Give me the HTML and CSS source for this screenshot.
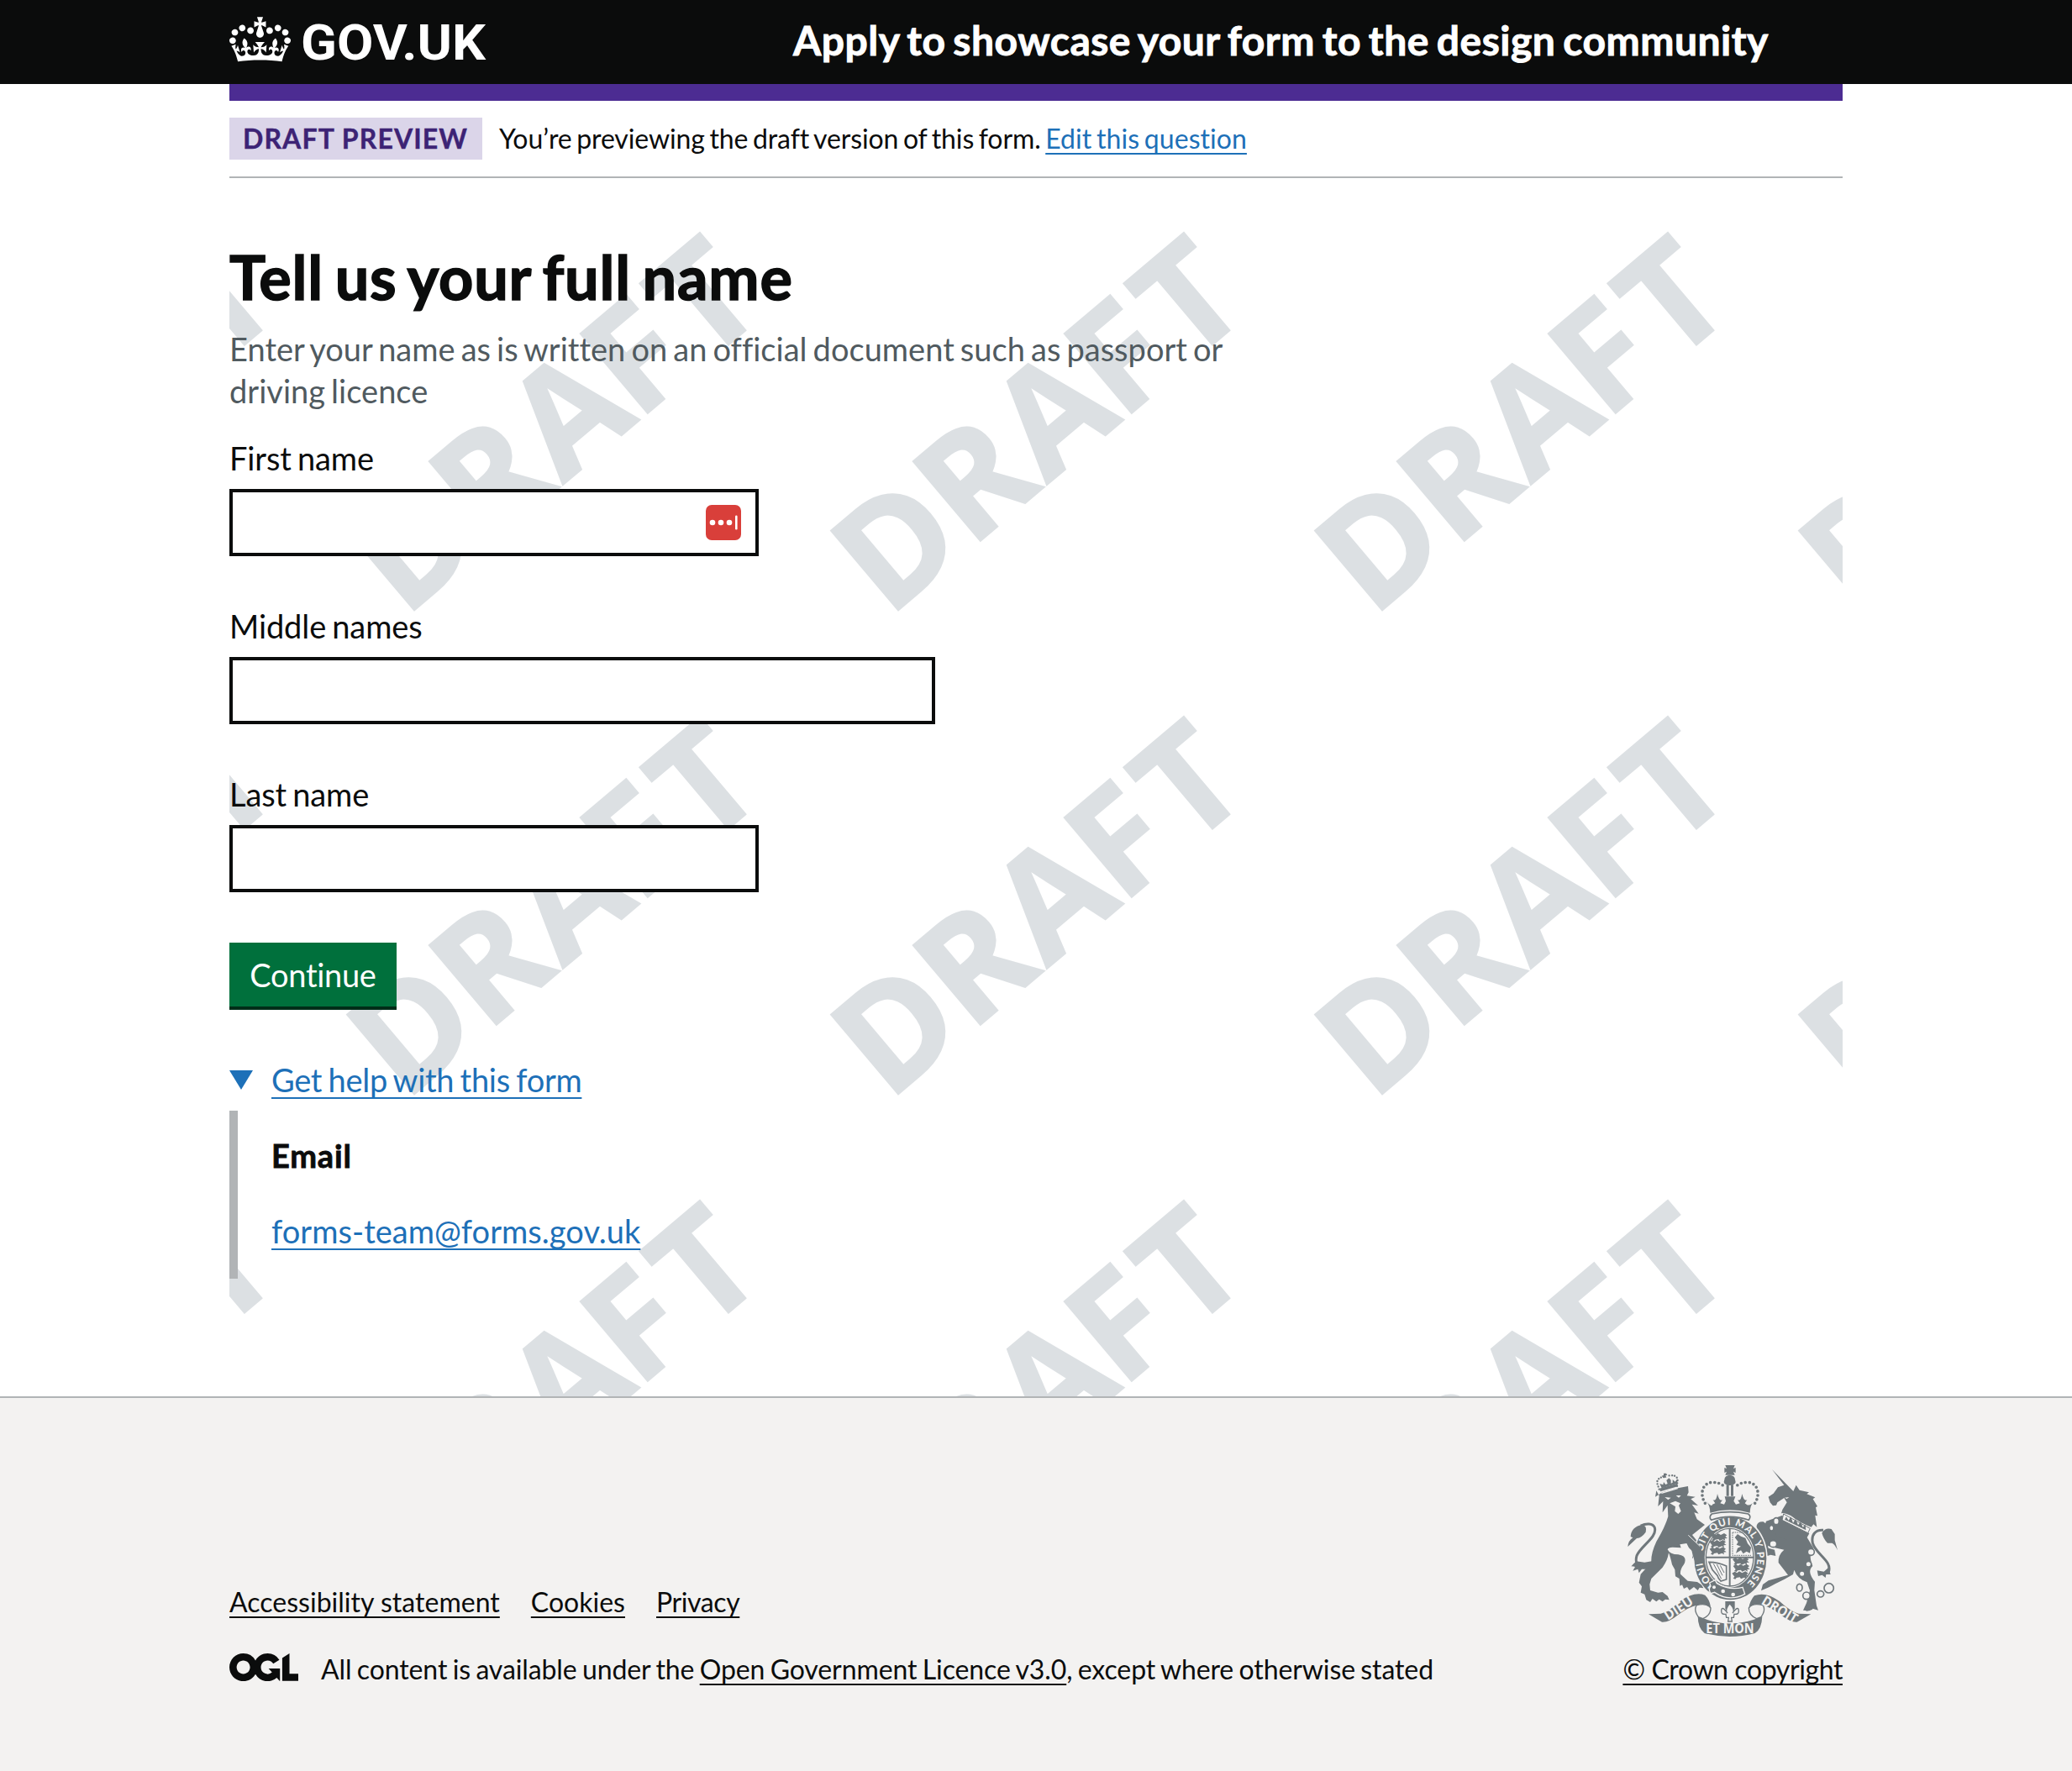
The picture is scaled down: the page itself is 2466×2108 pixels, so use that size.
FILE: index.html
```html
<!DOCTYPE html>
<html lang="en">
<head>
<meta charset="utf-8">
<title>Tell us your full name – Apply to showcase your form to the design community</title>
<link rel="stylesheet" href="styles.css">
</head>
<body>
<header class="header">
  <div class="container header-inner">
    <a class="logo" href="#" aria-label="GOV.UK">
      <svg class="crown" viewBox="0 0 132 97" width="73" height="54" aria-hidden="true"><path fill="#fff" d="M25 30.2c3.5 1.5 7.7-.2 9.1-3.7 1.5-3.6-.2-7.8-3.9-9.2-3.6-1.4-7.6.3-9.1 3.9-1.4 3.5.3 7.5 3.9 9zM9 39.5c3.6 1.5 7.8-.2 9.2-3.7 1.5-3.6-.2-7.8-3.9-9.1-3.6-1.5-7.6.2-9.1 3.8-1.4 3.5.3 7.5 3.8 9zM4.4 57.2c3.5 1.5 7.7-.2 9.1-3.8 1.5-3.6-.2-7.7-3.9-9.1-3.5-1.5-7.6.3-9.1 3.8-1.4 3.5.3 7.6 3.9 9.1zm38.3-21.4c3.5 1.5 7.7-.2 9.1-3.8 1.5-3.6-.2-7.7-3.9-9.1-3.6-1.5-7.6.3-9.1 3.8-1.3 3.6.4 7.7 3.9 9.1zm64.4-5.6c-3.6 1.5-7.8-.2-9.1-3.7-1.5-3.6.2-7.8 3.8-9.2 3.6-1.4 7.7.3 9.2 3.9 1.3 3.5-.4 7.5-3.9 9zm15.9 9.3c-3.6 1.5-7.7-.2-9.1-3.7-1.5-3.6.2-7.8 3.7-9.1 3.6-1.5 7.7.2 9.2 3.8 1.5 3.5-.3 7.5-3.8 9zm4.7 17.7c-3.6 1.5-7.8-.2-9.2-3.8-1.5-3.6.2-7.7 3.9-9.1 3.6-1.5 7.7.3 9.2 3.8 1.3 3.5-.4 7.6-3.9 9.1zM89.3 35.8c-3.6 1.5-7.8-.2-9.2-3.8-1.4-3.6.2-7.7 3.9-9.1 3.6-1.5 7.7.3 9.2 3.8 1.4 3.6-.3 7.7-3.9 9.1zM69.7 17.7l8.9 4.7V9.3l-8.9 2.8c-.2-.3-.5-.6-.9-.9L72.4 0H59.6l3.5 11.2c-.3.3-.6.5-.9.9l-8.8-2.8v13.1l8.8-4.7c.3.3.6.7.9.9l-5 15.4v.1c-.2.8-.4 1.6-.4 2.4 0 4.1 3.1 7.5 7 8.1h.2c.3 0 .7.1 1 .1.4 0 .7 0 1-.1h.2c4-.6 7.1-4.1 7.1-8.1 0-.8-.1-1.7-.4-2.4V34l-5.1-15.4c.4-.2.7-.6 1-.9zM66 92.8c16.9 0 32.8 1.1 47.1 3.2 4-16.9 8.9-26.7 14-33.5l-9.6-3.4c1 4.9 1.1 7.2 0 10.2-1.5-1.4-3-4.3-4.2-8.7L108.6 76c2.8-2 5-3.2 7.5-3.3-4.4 9.4-10 11.9-13.6 11.2-4.3-.8-6.3-4.6-5.6-7.9 1-4.7 5.7-5.9 8-.5 4.3-8.7-3-11.4-7.6-8.8 7.1-7.2 7.9-13.5 2.1-21.1-8 6.1-8.1 12.3-4.5 20.8-4.7-5.4-12.1-2.5-9.5 6.2 3.4-5.2 7.9-2 7.2 3.1-.6 4.3-6.4 7.8-13.5 7.2-10.3-.9-10.9-8-11.2-13.8 2.5-.5 7.1 1.8 11 7.3L80.2 60c-4.1 4.4-8 5.3-12.3 5.4 1.4-4.4 8-11.6 8-11.6H55.5s6.4 7.2 7.9 11.6c-4.2-.1-8-1-12.3-5.4l1.4 16.4c3.9-5.5 8.5-7.7 10.9-7.3-.3 5.8-.9 12.8-11.1 13.8-7.2.6-12.9-2.9-13.5-7.2-.7-5 3.8-8.3 7.1-3.1 2.7-8.7-4.6-11.6-9.4-6.2 3.7-8.5 3.6-14.7-4.6-20.8-5.8 7.6-5 13.9 2.2 21.1-4.7-2.6-11.9.1-7.7 8.8 2.3-5.5 7.1-4.2 8.1.5.7 3.3-1.3 7.1-5.7 7.9-3.5.7-9-1.8-13.5-11.2 2.5.1 4.7 1.3 7.5 3.3l-4.7-15.4c-1.2 4.4-2.7 7.2-4.3 8.7-1.1-3-.9-5.3 0-10.2l-9.5 3.4c5 6.9 9.9 16.7 14 33.5 14.8-2.1 30.8-3.2 47.7-3.2z"/></svg>
      <svg class="wordmark" width="230" height="70" aria-hidden="true"><text x="0" y="51" textLength="220" lengthAdjust="spacingAndGlyphs">GOV.UK</text></svg>
    </a>
    <a class="service" href="#">Apply to showcase your form to the design community</a>
  </div>
</header>

<div class="container banner">
  <strong class="tag">DRAFT PREVIEW</strong>
  <p class="banner-text">You’re previewing the draft version of this form. <a class="edit" href="#">Edit this question</a></p>
</div>

<main class="container main">
  <svg class="watermark" aria-hidden="true">
    <defs>
      <pattern id="draft" x="91" y="0" width="576" height="576" patternUnits="userSpaceOnUse">
        <text class="draft" transform="translate(129 515.5) rotate(-40.2)" x="-14.5 113.5 232.5 349 453.5" y="-1">DRAFT</text>
      </pattern>
    </defs>
    <rect width="100%" height="100%" fill="url(#draft)"/>
  </svg>
  <form class="form">
    <h1 class="title">Tell us your full name</h1>
    <p class="hint">Enter your name as is written on an official document such as passport or driving licence</p>
    <div class="field">
      <label class="label" for="first">First name</label>
      <div class="input-wrap">
        <input class="input" id="first" type="text">
        <svg class="manager" viewBox="0 0 42 42" width="42" height="42" aria-hidden="true"><rect width="42" height="42" rx="7" fill="#d93f3a"/><g fill="#fff"><circle cx="8" cy="21" r="3.3"/><circle cx="18" cy="21" r="3.3"/><circle cx="28" cy="21" r="3.3"/><rect x="35" y="12.5" width="2.6" height="17" rx="1.2"/></g></svg>
      </div>
    </div>
    <div class="field">
      <label class="label" for="middle">Middle names</label>
      <input class="input wide" id="middle" type="text">
    </div>
    <div class="field">
      <label class="label" for="last">Last name</label>
      <input class="input" id="last" type="text">
    </div>
    <button class="button" type="button">Continue</button>
  </form>
  <section class="help">
    <div class="summary"><span class="arrow"></span><a class="link help-link" href="#">Get help with this form</a></div>
    <div class="help-body">
      <h2 class="help-title">Email</h2>
      <a class="link mail" href="#">forms-team@forms.gov.uk</a>
    </div>
  </section>
</main>

<footer class="footer">
  <div class="container footer-inner">
    <div class="meta">
      <nav class="footer-links">
        <a class="wide-text" href="#">Accessibility statement</a>
        <a class="wide-text" href="#">Cookies</a>
        <a href="#">Privacy</a>
      </nav>
      <div class="licence">
        <svg class="ogl" viewBox="0 0 483.2 195.7" width="82" height="33.2" aria-label="OGL"><path d="M421.5 142.8V.1l-50.7 32.3v161.1h112.4v-50.7zm-122.3-9.6A47.12 47.12 0 0 1 221 97.8c0-26 21.1-47.1 47.1-47.1 16.7 0 31.4 8.7 39.7 21.8l42.7-27.2A97.63 97.63 0 0 0 268.1 0c-36.5 0-68.3 20.1-85.1 49.7A98 98 0 0 0 97.8 0C43.9 0 0 43.9 0 97.8s43.9 97.8 97.8 97.8c36.5 0 68.3-20.1 85.1-49.7a97.76 97.76 0 0 0 149.6 25.4l19.4 22.2h3v-87.8h-80l24.3 27.5zM97.8 145c-26 0-47.1-21.1-47.1-47.1s21.1-47.1 47.1-47.1 47.1 21.1 47.1 47.1S123.8 145 97.8 145"/></svg>
        <span>All content is available under the <a href="#">Open Government Licence v3.0</a>, except where otherwise stated</span>
      </div>
    </div>
    <div class="copyright">
      <svg class="crest" viewBox="51 42 750 612" width="250" height="204" aria-hidden="true">
        <defs>
          <path id="motto" d="M372 475A98 116 0 1 1 462 474"/>
          <g id="beast">
            <path d="M-30-12l10-6 8 5 8-6 10 6 12-6 10 7-6 5 8 6-10 1 2 8-8-5-12 5-4-6-12 2-4 5-8-3 5-6z"/>
          </g>
        </defs>
        <g fill="#6f777b">
          <!-- lion -->
          <path d="M150 155l25-16 60-16 32-6 2 22-6 12 30 4-16 8 26 23-22-4 24 33-16-4 10 24 28 20-30 24-15 12 40 50 12 50-2 22-14-12-16 12 2-18-14 2 6-14-14-10 6-18-18-18-8-16-24 4 4 12-30-2q-16 0-18 8 8 18 38 18 36 6 20 36-14 18-12 34l26 24 34 4 18 12 4 10-14-2-6 10-14-12-16 12-8-12-12 6-6-14-8 4-2-26-14-8-2-24-10-18q-6-28-12-42-4 28-22 52l-40 40-6 20 2 22 28 8 16-2 18 14 6 14-14-2-10 8-12-8-10 8-14-10-8 12-14-8-6-20-14-6 4-22-10-14 6-30 38-42q-2-32 18-74 32-54 42-90l-2-40-18 26 2-40-18 18 4-38-10-18z"/>
          <path d="M165 125l64-18 1 11-62 18z"/>
          <path d="M172 122l-6-14 12 4 2-10 7 9 7-3-4-12 9-8 7 7 0 12 6-3 0-11 9 8 8-10 0 16-54 17z"/>
          <path d="M178 86h12l-3-7 6-2-4-6h-9l0 7-7 2z"/>
          <path d="M52 333q2-22 18-32l-8-4q2-34 40-42 20 2 14 26-14 20-32 22z"/>
          <path d="M82 385q-14 14-18 18 10 0 14 2l-8 14 18-6 4 14 10-14 20 0 24-30-34 6z"/>
          <!-- unicorn -->
          <path d="M567 57l76 78 10-22 12 18 34 8-8 6 30 12-8 6 16 26-6 4 6 30-8-2 6 42-12-10-8 10q-40-14-72-40-36-16-36-6l5-16 16-26-10-16-24 16-4 10-12 2-10-12-6-20 18-12 16-22 22-8z"/>
          <path d="M602 222q50 18 98 64l-8 14 24 40q-22 18-4 62-22 20 8 56l-2 30 8 56 6 16-20-6-12 8-22-2 12-26 12-44-10-30q-34-12-46-44l-4 16-32 18-32 16-22 12-28 12 6-22 20-14 70-20-34-44q-2-28 20-46l-46-10-30-10-12-38q14-8 24-44z"/>
          <path d="M512 258q4-16 24-14l38 30 10 24 36 10-20 24-32-14-26-20-30 2 6 22-10-4-6-22 10-10z"/>
          <path d="M524 300l18-6 12 44 22 6 4 22-18-4-12 4-4-18-18-16z"/>
          <path d="M712 528l-24 36 22-6 10-16z"/>
          <path d="M745 284q12-20 34-14l12 18 0 22 10 36q-10-22-20-26l-16 0q-14-14-20-36z"/>
          <path d="M728 418l24 4 16-14 8 24-16 0-2 12-12-10-14 4z"/>
          <!-- central crown -->
          <path d="M400 42h34l-5 12 8-3v18l-8-4 5 12h-34l5-12-8 4v-18l8 3z"/>
          <path d="M397 94a19 17 0 0 1 38 0l2 8a21 12 0 0 1-42 0z"/>
          <path d="M404 112h9v40h-9zM420 112h9v40h-9z"/>
          <path d="M332 170q20 24 22 12l10-4-8-12q12 6 16-22 6 28 18 22l-8 12 14 4 6-12-4-16h38l-6 16 8 12 14-4-8-12q12 6 16-22 6 28 18 22l-8 12 8 6q14 4 26-16-16 18-16 44-72-20-142 0 0-26-14-42z"/>
        </g>
        <g fill="none" stroke="#6f777b">
          <path stroke-width="11" stroke-linecap="round" stroke-dasharray="0 15" d="M328 178C306 142 320 102 358 103Q382 105 394 116M506 178C528 142 514 102 476 103Q452 105 440 116"/>
          <path stroke-width="7" stroke-linecap="round" stroke-dasharray="0 10" d="M164 128L156 104Q160 84 182 84M228 116L230 92Q224 74 196 80"/>
          <path stroke-width="9" d="M140 392C110 420 72 405 84 365C98 330 158 300 148 265C142 248 116 250 98 258M768 426C786 384 722 360 712 320C706 290 722 272 750 274"/>
        </g>
        <path d="M172 142l58-17" stroke="#f3f2f1" stroke-width="4"/>
        <path d="M184 156l22 2-10 8zM224 150l18 0-8 8zM202 178l20-8 18 8-6 8 8 20-10 10-12-10 2-16z" fill="#f3f2f1"/>
        <path d="M612 158l16-2-8 6z" fill="#f3f2f1"/>
        <path d="M608 216l95 52-8 16-92-46z" fill="#f3f2f1" stroke="#6f777b" stroke-width="3"/>
        <path d="M612 236l6-10 8 14 8-14 8 22 9-14 9 22 9-12 8 20 9-10 2 20z" fill="#6f777b"/>
        <!-- garter and shield -->
        <ellipse cx="418" cy="373" rx="133" ry="153" fill="#f3f2f1"/>
        <ellipse cx="418" cy="375" rx="129" ry="148" fill="#6f777b"/>
        <ellipse cx="416" cy="371" rx="90" ry="108" fill="#f3f2f1"/>
        <ellipse cx="416" cy="371" rx="85" ry="103" fill="none" stroke="#6f777b" stroke-width="4"/>
        <path d="M416 268v206M330 371h172" stroke="#6f777b" stroke-width="6"/>
        <path d="M352 216Q416 202 482 216q12 8 2 22Q416 214 350 238q-10-12 2-22z" fill="#f3f2f1" stroke="#6f777b" stroke-width="5"/>
        <g fill="#6f777b">
          <use href="#beast" x="378" y="304"/><use href="#beast" x="374" y="328"/><use href="#beast" x="374" y="353"/>
          <use href="#beast" x="456" y="390"/><use href="#beast" x="458" y="414"/><use href="#beast" x="454" y="440"/>
          <path d="M434 300l10-12 12 8 16 6 8 20 12 14-4 20-12-6-12 8-8-12-18 10 6-18 12-6-16-6 6-10z"/>
        </g>
        <path d="M342 388q32 0 62 14l0 48-20 6q-10-10-12-20l-18-20z" fill="none" stroke="#6f777b" stroke-width="5"/>
        <path d="M358 394l28 54M370 396l20 40M382 400l14 26" stroke="#6f777b" stroke-width="3"/>
        <path d="M426 282h66M426 282v82h66" stroke="#6f777b" stroke-width="3" stroke-dasharray="5 3" fill="none"/>
        <text class="motto"><textPath href="#motto" textLength="560">HONI SOIT QUI MAL Y PENSE</textPath></text>
        <path d="M344 462l20-10 6 12q44 26 92 14l8 24q-56 30-108-6l-14 4q-10-16 0-26z" fill="#6f777b" stroke="#f3f2f1" stroke-width="4"/>
        <g fill="#f3f2f1"><circle cx="360" cy="478" r="6"/><circle cx="392" cy="492" r="7"/><circle cx="428" cy="504" r="7"/></g>
        <!-- lion paw over the garter -->
        <path d="M268 292l40 36 16 40 0 28-14-10-14 12-12-34z" fill="#6f777b"/>
        <path d="M268 292l42 40" stroke="#f3f2f1" stroke-width="3"/>
        <!-- chain -->
        <g fill="#f3f2f1" stroke="#6f777b" stroke-width="5">
          <ellipse cx="582" cy="242" rx="10" ry="12"/><ellipse cx="565" cy="266" rx="8" ry="10"/><ellipse cx="571" cy="323" rx="13" ry="12"/>
          <circle cx="706" cy="352" r="12"/><circle cx="697" cy="395" r="10"/><circle cx="674" cy="430" r="10"/>
          <ellipse cx="665" cy="479" rx="10" ry="13"/><circle cx="690" cy="508" r="13"/><ellipse cx="740" cy="502" rx="12" ry="11"/><circle cx="770" cy="481" r="17"/>
        </g>
        <!-- ribbon -->
        <g fill="#6f777b">
          <path d="M126 574l44-2q30-8 68-44 50-36 90-22 18 18 20 46-14-12-50-10-28 6-66 34-34 28-58 26z"/>
          <path d="M706 574l-44-2q-30-8-68-44-50-36-90-20-16 18-20 44 14-12 50-10 28 6 66 36 36 26 56 24z"/>
          <path d="M302 580q110 54 230 2-2 46-26 60-90 24-180 0-24-18-24-62z"/>
          <path d="M400 528h34v28h-34z"/>
        </g>
        <g fill="#f3f2f1" stroke="#6f777b" stroke-width="4">
          <path d="M298 542q36-10 50 10 0 26-28 38l-16-6q-18-26-6-42zM534 542q-36-10-50 10 0 26 28 38l16-6q18-26 6-42z"/>
          <path d="M416 536q22 24 10 34 22-30 22-6 0 12-16 10l-2 12h-8l2 14h-14l2-14h-8l-2-12q-16 2-16-10 0-24 22 6-12-10 8-34z"/>
        </g>
        <g class="scroll">
          <text transform="translate(195 597) rotate(-33)" textLength="112" lengthAdjust="spacingAndGlyphs">DIEU</text>
          <text transform="translate(526 536) rotate(31)" textLength="140" lengthAdjust="spacingAndGlyphs">DROIT</text>
          <text x="331" y="643" textLength="172" lengthAdjust="spacingAndGlyphs">ET MON</text>
        </g>
      </svg>
      <a href="#">© Crown copyright</a>
    </div>
  </div>
</footer>
</body>
</html>
```
FILE: styles.css
```css
* { box-sizing: border-box; }
body {
  margin: 0;
  min-height: 2108px;
  display: flex;
  flex-direction: column;
  font: 38px/50px Lato, "Open Sans", sans-serif;
  font-variant-ligatures: none;
  letter-spacing: -0.4px;
  color: #0b0c0c;
  background: #fff;
}
h1, h2, p { margin: 0; }
a {
  color: inherit;
  text-decoration-line: underline;
  text-decoration-thickness: 2px;
  text-underline-offset: 5px;
  text-decoration-skip-ink: none;
}
.container { width: 1920px; margin: 0 auto; }

.header { height: 100px; background: #0b0c0c; color: #fff; }
.header-inner { display: flex; align-items: flex-start; }
.logo { display: flex; width: 671px; padding-top: 20px; text-decoration: none; }
.wordmark { margin-left: 12px; overflow: visible; font: 700 59px Roboto, sans-serif; letter-spacing: 0; fill: #fff; }
.service {
  padding-top: 18px;
  font-size: 48px;
  line-height: 60px;
  font-weight: 700;
  letter-spacing: 0.5px;
  word-spacing: -3.3px;
  -webkit-text-stroke: 0.9px currentColor;
  text-decoration: none;
}

.banner {
  display: flex;
  align-items: center;
  height: 112px;
  border-top: 20px solid #4c2c92;
  border-bottom: 2px solid #b1b4b6;
  font-size: 32px;
  line-height: 40px;
}
.tag {
  width: 301px;
  height: 50px;
  padding-left: 16px;
  line-height: 50px;
  font-weight: 700;
  letter-spacing: 1.1px;
  -webkit-text-stroke: 0.4px currentColor;
  white-space: nowrap;
  color: #3d2375;
  background: #dbd5e9;
}
.banner-text { margin-left: 20px; padding-bottom: 1px; letter-spacing: -0.1px; word-spacing: -2.5px; white-space: nowrap; }
.edit { color: #1d70b8; letter-spacing: 0.05px; }

.main { position: relative; height: 1450px; padding-top: 77px; }
.watermark { position: absolute; inset: 0; width: 100%; height: 100%; }
.draft { font: 700 173px "Open Sans", sans-serif; letter-spacing: 0; fill: #dce0e3; stroke: #dce0e3; stroke-width: 2.5px; }
.form, .help { position: relative; }
.title {
  font-size: 72px;
  line-height: 80px;
  font-weight: 700;
  letter-spacing: 0.8px;
  word-spacing: -4.6px;
  -webkit-text-stroke: 1.5px currentColor;
}
.hint { width: 1260px; margin: 21px 0 30px; letter-spacing: 0.02px; word-spacing: -2.7px; color: #505a5f; }
.field { margin-bottom: 58px; }
.label { display: block; margin-bottom: 12px; letter-spacing: -0.1px; word-spacing: -2.5px; }
.input-wrap { position: relative; width: 630px; }
.input {
  display: block;
  width: 630px;
  height: 80px;
  margin: 0;
  padding: 10px;
  border: 4px solid #0b0c0c;
  border-radius: 0;
  background: #fff;
  font: inherit;
}
.wide { width: 840px; }
.manager { position: absolute; right: 21px; top: 19px; }
.button {
  display: block;
  width: 199px;
  height: 76px;
  margin: 60px 0 0;
  padding: 0;
  border: 0;
  background: #00703c;
  box-shadow: 0 4px 0 #002d18;
  color: #fff;
  font: inherit;
  letter-spacing: -0.3px;
}
.help { margin-top: 62px; }
.summary { display: flex; align-items: flex-start; height: 62px; }
.arrow {
  width: 28px;
  height: 23px;
  margin: 14px 22px 0 0;
  background: #1d70b8;
  clip-path: polygon(0 0, 100% 0, 50% 100%);
}
.link { color: #1d70b8; text-underline-offset: 6px; }
.help-link { letter-spacing: -0.3px; word-spacing: -2px; }
.help-body {
  height: 200px;
  padding: 28px 0 0 40px;
  border-left: 10px solid #b1b4b6;
}
.help-title {
  margin-bottom: 40px;
  font-size: 38px;
  line-height: 50px;
  letter-spacing: 0.8px;
  -webkit-text-stroke: 0.8px currentColor;
}
.mail { letter-spacing: 0.04px; }

.footer {
  flex: 1;
  border-top: 2px solid #b1b4b6;
  background: #f3f2f1;
  font-size: 32px;
  line-height: 40px;
}
.footer-inner { display: flex; justify-content: space-between; align-items: flex-end; padding-top: 80px; }
.footer-links { display: flex; gap: 37px; margin-bottom: 40px; }
.wide-text { letter-spacing: 0.02px; }
.licence { display: flex; align-items: flex-start; gap: 27px; letter-spacing: -0.1px; word-spacing: -1.7px; white-space: nowrap; }
.ogl { margin-top: 1px; fill: #0b0c0c; }
.copyright { display: flex; flex-direction: column; align-items: flex-end; }
.crest { margin: 0 6px 19px 0; }
.motto { font: 900 35px Lato, sans-serif; letter-spacing: 0; fill: #f3f2f1; }
.scroll { font: 700 50px "Open Sans", sans-serif; letter-spacing: 0; fill: #f3f2f1; }
```
